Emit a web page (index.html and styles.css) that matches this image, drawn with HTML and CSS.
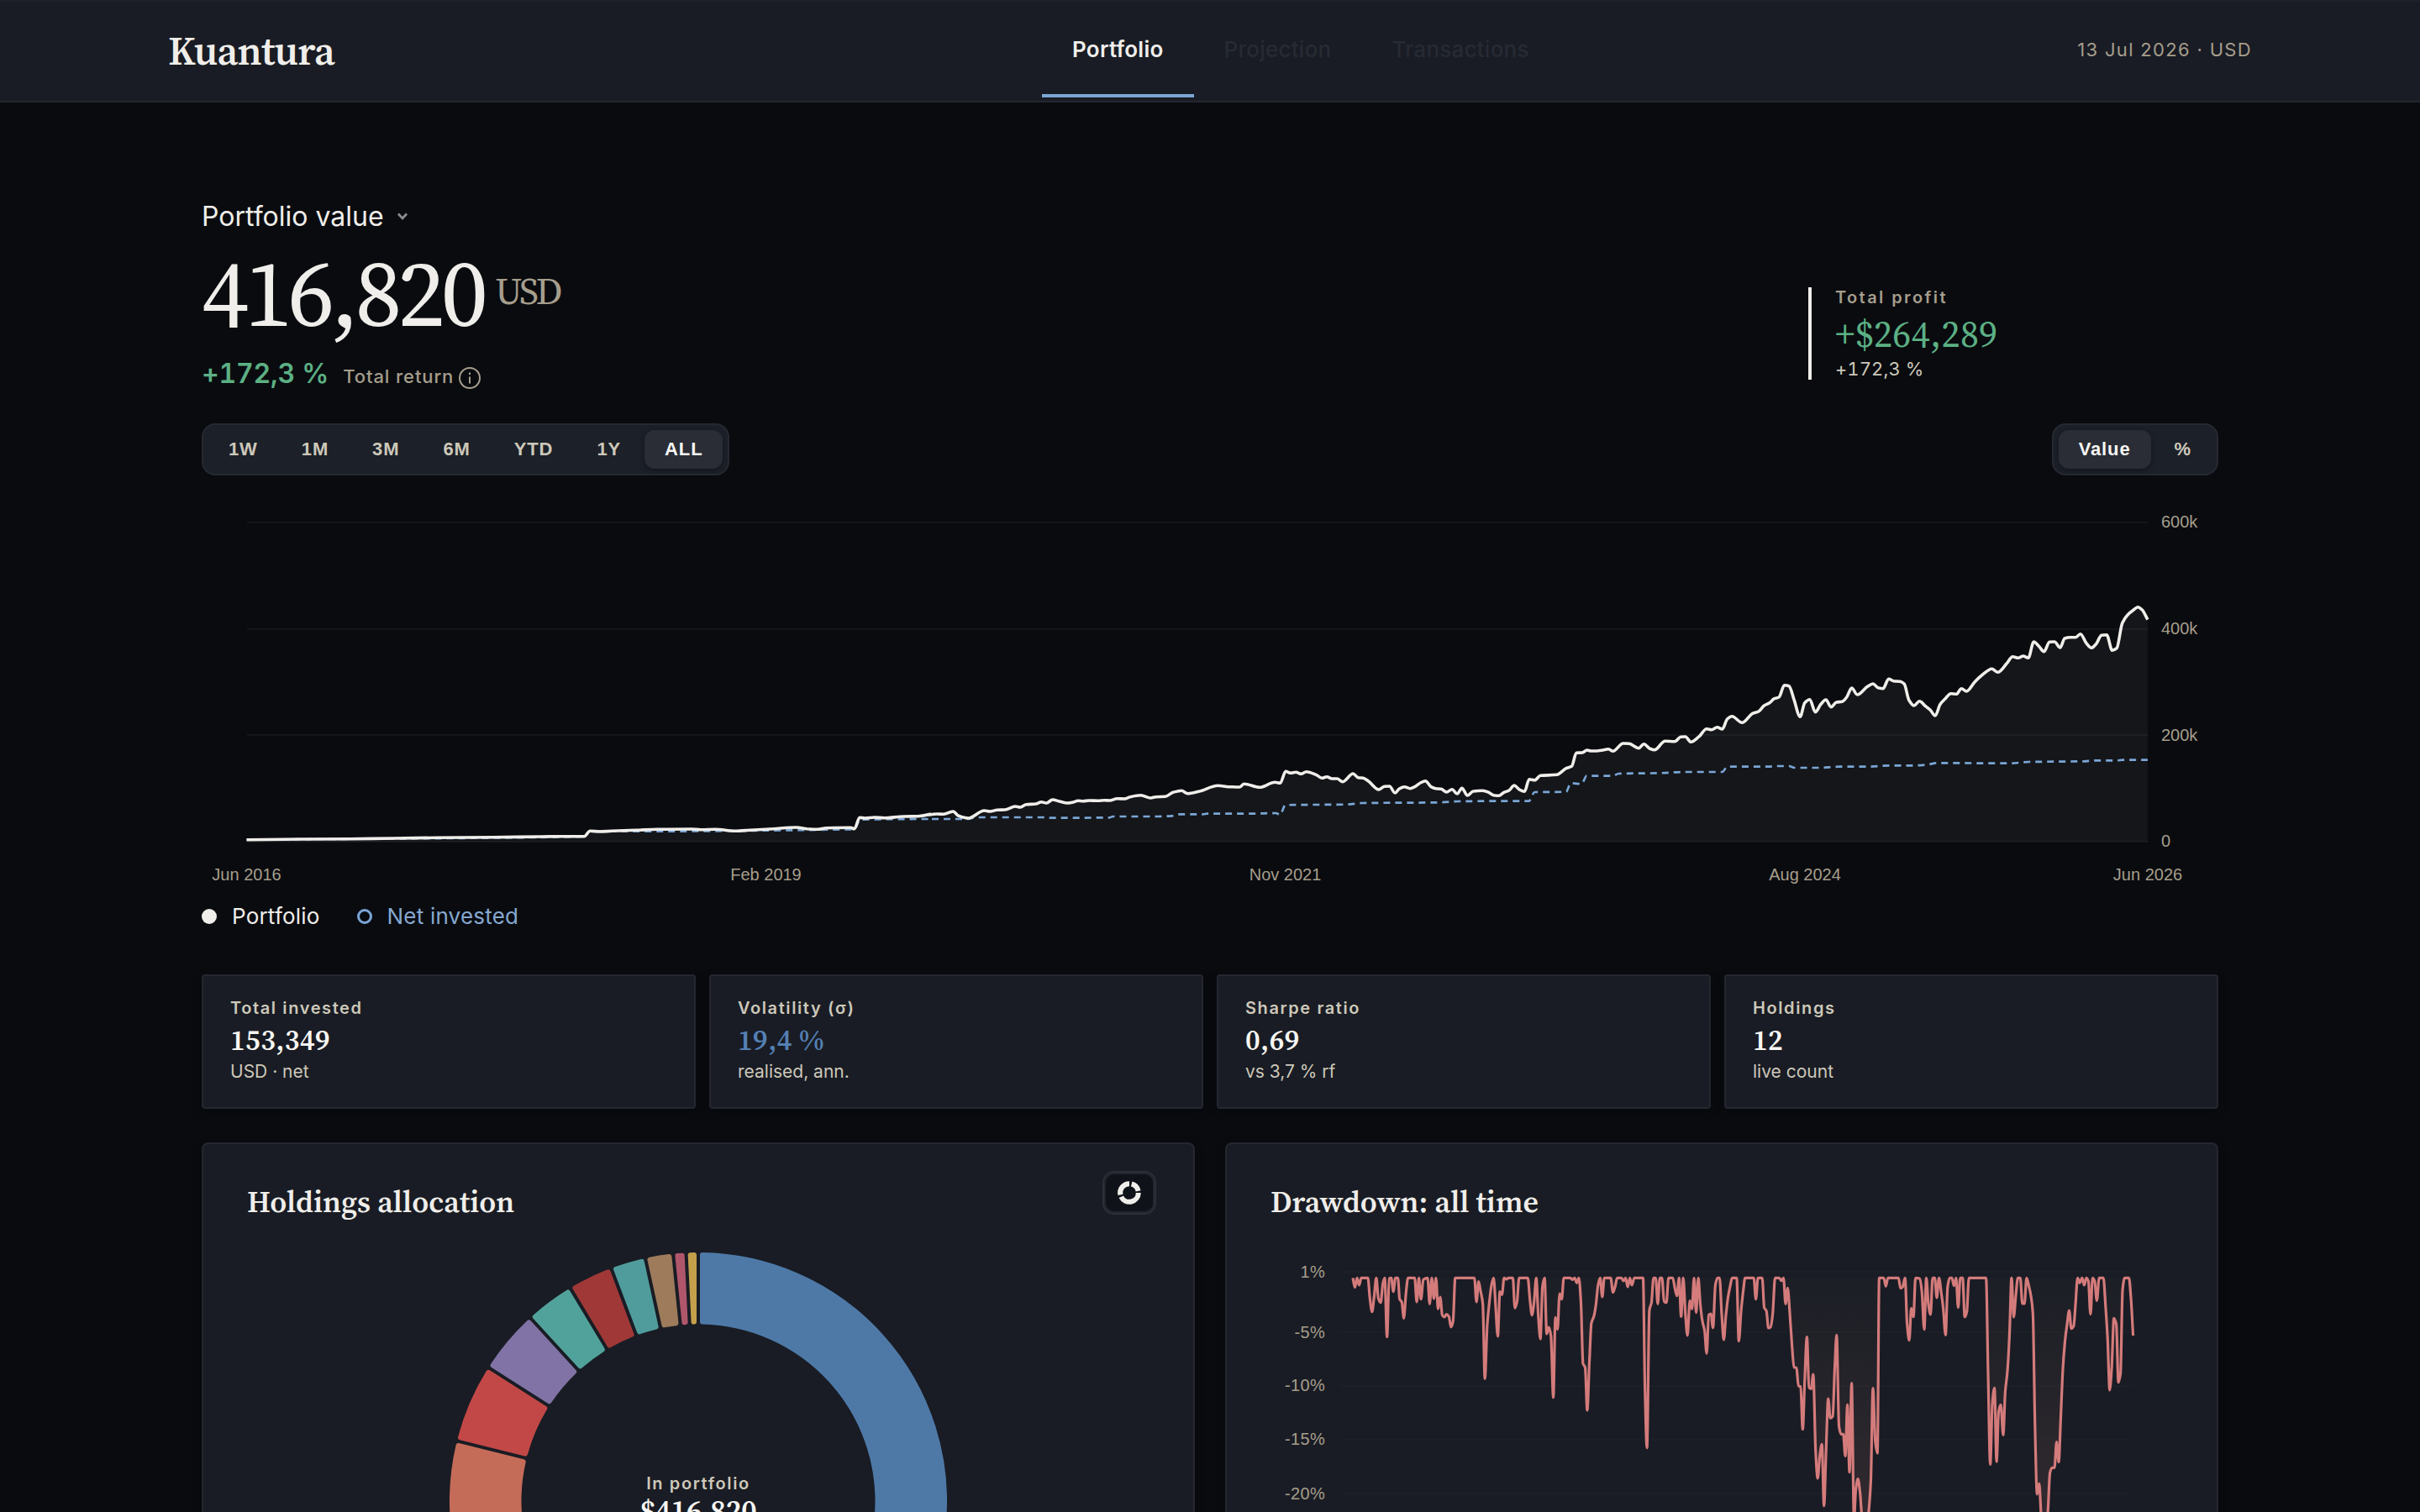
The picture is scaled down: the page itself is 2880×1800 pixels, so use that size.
FILE: index.html
```
<!DOCTYPE html>
<html lang="en">
<head>
    <meta charset="UTF-8">
    <meta name="viewport" content="width=device-width, initial-scale=1.0">
    <title>Kuantura</title>
    <link rel="stylesheet" href="styles.css">
</head>
<body>

<header class="topbar">
    <div class="logo">Kuantura</div>
    <nav class="tabs">
        <a class="tab active">Portfolio</a>
        <a class="tab">Projection</a>
        <a class="tab">Transactions</a>
    </nav>
    <div class="date">13 Jul 2026 · USD</div>
</header>

<main>
    <!-- Headline numbers -->
    <section class="hero">
        <div>
            <div class="hero-title">
                <span>Portfolio value</span>
                <svg class="chevron" width="16" height="12" viewBox="0 0 16 12"><path d="M3 2.5l5 5.5 5-5.5"/></svg>
            </div>
            <div class="hero-value"><span>416,820</span><span class="currency">USD</span></div>
            <div class="hero-return">
                <span class="gain">+172,3 %</span>
                <span class="return-label">Total return</span>
                <svg class="info" width="28" height="28" viewBox="0 0 28 28">
                    <circle cx="14" cy="14" r="12"/>
                    <path d="M14 12.5v8M14 7.5v2.4"/>
                </svg>
            </div>
        </div>
        <div class="profit">
            <div class="profit-label">Total profit</div>
            <div class="profit-value">+$264,289</div>
            <div class="profit-sub">+172,3 %</div>
        </div>
    </section>

    <div class="toolbar">
        <div class="segmented">
            <button>1W</button>
            <button>1M</button>
            <button>3M</button>
            <button>6M</button>
            <button>YTD</button>
            <button>1Y</button>
            <button class="active">ALL</button>
        </div>
        <div class="segmented">
            <button class="active">Value</button>
            <button>%</button>
        </div>
    </div>

    <!-- Value chart -->
    <svg class="chart" width="2400" height="460" viewBox="240 600 2400 460">
        <g class="grid">
            <path d="M294 622H2556M294 749H2556M294 875H2556M294 1002H2556"/>
        </g>
        <path id="valueArea" class="value-area"/>
        <path id="investedLine" class="invested-line"/>
        <path id="valueLine" class="value-line"/>
        <g class="axis">
            <text x="2572" y="628">600k</text>
            <text x="2572" y="755">400k</text>
            <text x="2572" y="882">200k</text>
            <text x="2572" y="1008">0</text>
        </g>
        <g class="axis axis-x">
            <text x="293.5" y="1048">Jun 2016</text>
            <text x="911.5" y="1048">Feb 2019</text>
            <text x="1529.5" y="1048">Nov 2021</text>
            <text x="2148" y="1048">Aug 2024</text>
            <text x="2556" y="1048">Jun 2026</text>
        </g>
    </svg>
    <div class="legend">
        <span class="dot"></span><span class="legend-portfolio">Portfolio</span>
        <span class="dot ring"></span><span class="legend-invested">Net invested</span>
    </div>

    <section class="stats">
        <div class="stat">
            <div class="stat-label">Total invested</div>
            <div class="stat-value">153,349</div>
            <div class="stat-sub">USD · net</div>
        </div>
        <div class="stat">
            <div class="stat-label">Volatility (σ)</div>
            <div class="stat-value blue">19,4 %</div>
            <div class="stat-sub">realised, ann.</div>
        </div>
        <div class="stat">
            <div class="stat-label">Sharpe ratio</div>
            <div class="stat-value">0,69</div>
            <div class="stat-sub">vs 3,7 % rf</div>
        </div>
        <div class="stat">
            <div class="stat-label">Holdings</div>
            <div class="stat-value">12</div>
            <div class="stat-sub">live count</div>
        </div>
    </section>

    <section class="panels">
        <div class="panel">
            <div class="panel-head">
                <h2>Holdings allocation</h2>
                <button class="view-toggle">
                    <svg width="32" height="32" viewBox="0 0 32 32">
                        <path d="M18.7 5.5A10.8 10.8 0 0 1 26.6 13.8M26.8 16A10.8 10.8 0 0 1 6.3 20.7M5.4 18.4A10.8 10.8 0 0 1 16 5.2"/>
                    </svg>
                </button>
            </div>
            <svg class="chart" width="1074" height="620" viewBox="294 1480 1074 620">
                <g id="donut"></g>
                <text class="donut-label" x="831" y="1773">In portfolio</text>
                <text class="donut-value" x="831" y="1811">$416,820</text>
            </svg>
        </div>
        <div class="panel">
            <div class="panel-head">
                <h2>Drawdown: all time</h2>
            </div>
            <svg class="chart" width="1074" height="620" viewBox="1512 1480 1074 620">
                <defs>
                    <linearGradient id="ddFill" gradientUnits="userSpaceOnUse" x1="0" y1="1521" x2="0" y2="1850">
                        <stop offset="0" stop-color="#8a7a60" stop-opacity="0.03"/>
                        <stop offset="1" stop-color="#d47b7b" stop-opacity="0.16"/>
                    </linearGradient>
                </defs>
                <g class="grid faint">
                    <path d="M1594 1514H2539M1594 1586H2539M1594 1650H2539M1594 1714H2539M1594 1778H2539"/>
                </g>
                <path id="ddArea" fill="url(#ddFill)"/>
                <path id="ddLine" class="dd-line"/>
                <g class="axis axis-y">
                    <text x="1577" y="1521">1%</text>
                    <text x="1577" y="1592.5">-5%</text>
                    <text x="1577" y="1656">-10%</text>
                    <text x="1577" y="1720">-15%</text>
                    <text x="1577" y="1784.5">-20%</text>
                </g>
            </svg>
        </div>
    </section>
</main>

<script>
// Each chunk: origin x/y, units per pixel x/y, then the "x,y" pairs
const VALUE = [
    [220, 840, 1.742, 3, '128,479 240,477 340,476 435,474 520,472 640,470 740,468 780,467 828,467 840,448 860,450 885,448 935,445 980,442 1050,441 1070,443 1100,442 1140,448 1170,445 1220,440 1268,435 1290,440 1312,442 1330,437 1380,436 1388,440 1399,400 1410,402 1430,399 1450,401 1490,396 1520,395 1545,388'],
    [1100, 780, 1.96, 3, '12,570 30,567 45,568 67,558 80,574 103,582 140,555 153,558 170,553 188,552 212,540 224,543 238,533 260,531 273,524 285,528 299,516 315,522 334,528 345,526 359,520 370,521 385,519 405,520 420,518 432,519 450,512 467,513 480,506 505,500 528,510 540,506 562,505 580,490 600,484 614,494 640,487 685,466 710,470 735,471 746,460 782,472 818,454 830,457 843,415 855,421 867,418 879,424 891,416 915,428 928,439 939,434 951,441 963,441 976,452 1000,423 1012,437 1024,439 1036,450 1060,480 1073,469 1085,468 1098,492 1108,477 1120,470 1133,476 1145,469 1157,456 1169,449 1182,470 1193,476 1206,478 1218,489 1231,479 1243,495 1254,475 1267,501 1280,486 1300,484 1314,488 1328,500 1340,502 1352,490 1364,483 1376,465 1388,480 1400,487 1411,443 1424,446 1437,430 1475,427 1497,404 1510,397 1521,349 1535,348 1546,339 1555,342 1568,342'],
    [1800, 600, 1.823, 3, '196,879 208,875 218,883 240,855 253,856 274,872 285,857 298,874 308,878 331,847 352,848 365,832 375,831 387,850 405,830 421,803 432,806 444,797 455,804 466,768 476,758 498,781 521,748 534,741 546,720 557,711 568,695 578,690 590,647 600,650 611,700 624,760 634,710 645,698 657,743 669,715 680,699 691,725 703,708 715,706 725,690 736,657 748,681 770,652 782,642 793,656 804,659 816,625 827,632 841,634 850,643 860,700 871,720 883,704 896,722 906,735 917,756 928,715 939,695 951,677 963,679 974,659 985,669 1003,635 1018,612 1040,589 1053,601 1072,570 1085,545 1097,550 1108,543 1119,550 1131,492 1142,508 1153,527 1165,493 1176,492 1188,513 1198,480 1210,476 1222,476 1232,464 1245,497 1256,514 1266,500 1278,469 1289,467 1301,523 1311,515 1323,425 1335,395 1346,380 1357,368 1366,378 1378,413']
];

const INVESTED = [
    [220, 840, 1.742, 3, '128,479 825,468 840,449 930,449 1380,442 1388,441 1400,407 1545,405'],
    [1100, 780, 1.96, 3, '12,585 103,585 118,579 275,579 290,581 432,580 440,576 545,576 578,574 592,568 650,568 660,566 760,566 820,564 830,570 842,535 985,533 1022,528 1200,526 1245,522 1330,521 1410,521 1424,489 1497,488 1508,457 1533,460 1545,431 1568,431'],
    [1800, 600, 1.823, 3, '218,971 230,963 320,961 370,957 455,957 466,938 555,938 570,936 600,936 612,942 665,942 710,938 770,938 820,934 870,934 900,931 920,925 1080,926 1120,921 1240,919 1260,916 1310,916 1325,914 1378,914']
];

const DRAWDOWN = [
    [1500, 1480, 2.8, 3, '308,124 315,158 322,124 329,150 336,124 358,124 365,200 372,245 379,190 386,124 393,198 401,212 408,145 414,124 422,335 429,126 436,124 443,173 450,124 458,124 464,200 471,210 478,268 485,180 492,124 514,124 521,210 528,124 535,200 543,130 557,124 564,217 571,124 578,198 585,124 592,235 599,192 606,257 613,264 620,254 628,262 635,300 642,278 649,124 713,124 720,210 727,137 734,173 741,215 748,484 756,290 763,210 770,150 777,124 784,230 791,333 798,173 805,184 812,124 820,129 827,124 841,124 848,232 855,210 862,124 891,124 898,200 905,257 912,210 919,124 926,260 933,342 940,155 947,124 954,324 961,300 968,330 976,551 983,265 990,308 997,180 1004,200 1011,124 1032,124 1040,130 1047,124 1054,142 1061,124 1068,210 1075,430 1082,443 1089,597 1096,430 1103,285 1111,262 1118,220 1125,150 1132,124 1139,192 1146,124 1167,124 1175,176 1182,155 1189,124 1203,124 1210,135 1217,124 1224,156 1231,124 1238,150 1246,124 1275,124 1281,500 1288,731 1296,240 1303,212 1310,124 1317,124 1324,217 1331,124 1338,124 1345,208 1353,212 1360,124 1374,124 1381,160 1388,188 1395,124 1402,262 1409,124 1416,250 1423,330 1431,205 1438,235 1445,124 1452,248 1459,124 1466,220 1473,280 1480,312 1487,394 1494,256 1501,252 1508,302'],
    [2040, 1480, 2.8, 3, '4,150 11,124 18,124 25,250 32,345 39,260 46,195 53,155 60,124 75,124 82,350 90,240 97,170 103,124 132,124 139,200 146,124 160,124 167,230 174,242 181,303 188,300 195,255 203,124 217,124 224,134 231,124 238,217 245,160 252,250 259,360 266,443 274,445 281,510 288,512 295,665 302,480 309,335 316,515 323,520 330,468 338,740 345,840 352,760 359,718 366,938 373,740 380,555 387,625 395,618 402,440 408,328 416,655 423,682 430,682 437,760 444,577 451,818 458,500 466,985 472,880 479,842 486,890 493,990 500,1050 508,1050 515,960 522,850 529,518 537,710 544,750 550,124 565,124 572,154 579,124 614,124 621,161 628,156 636,124 643,290 650,347 657,232 664,263 671,124 685,126 692,170 700,308 707,124 714,220 721,255 728,124 735,124 742,195 749,124 757,180 763,230 771,328 778,155 785,124 792,124 799,152 806,124 813,230 820,124 828,124 835,264 842,245 849,124 906,124 913,480 920,790 927,570 934,517 941,780 948,600 955,577 963,685 970,530 977,460 984,330 991,124 998,264 1005,190 1012,124 1020,124 1027,216 1034,216 1041,124 1048,150 1055,185 1062,250 1069,650 1076,897 1083,858 1090,980 1098,1040 1105,1040 1112,960 1119,820 1126,802 1134,802 1141,710 1148,782 1155,620 1162,450 1169,350 1176,290 1183,240 1190,305 1198,295 1204,220 1211,124 1218,142 1226,124 1233,150 1240,124 1247,136 1254,254 1261,124 1268,136 1275,205 1283,124 1297,124 1304,220 1311,340 1318,525 1325,440 1332,268 1340,290 1347,497 1354,465 1361,165 1368,124 1382,124 1389,200 1396,330']
];

function toPoints(chunks) {
    return chunks.flatMap(([ox, oy, kx, ky, text]) => text.split(' ').map(pair => {
        const [x, y] = pair.split(',').map(Number);
        return [ox + x / kx, oy + y / ky];
    }));
}

// Monotone cubic path through the points
function smoothPath(p) {
    const n = p.length;
    const slope = [];
    for (let i = 0; i < n - 1; i++) {
        slope.push((p[i + 1][1] - p[i][1]) / (p[i + 1][0] - p[i][0]));
    }
    const m = p.map((_, i) => {
        if (i === 0) return slope[0];
        if (i === n - 1) return slope[n - 2];
        const a = slope[i - 1], b = slope[i];
        return a * b <= 0 ? 0 : 2 * a * b / (a + b);
    });
    let d = `M${p[0][0].toFixed(1)} ${p[0][1].toFixed(1)}`;
    for (let i = 0; i < n - 1; i++) {
        const h = (p[i + 1][0] - p[i][0]) / 3;
        d += 'C' + [p[i][0] + h, p[i][1] + h * m[i], p[i + 1][0] - h, p[i + 1][1] - h * m[i + 1], p[i + 1][0], p[i + 1][1]]
            .map(v => v.toFixed(1)).join(' ');
    }
    return d;
}

function setPath(id, d) {
    document.getElementById(id).setAttribute('d', d);
}

const value = smoothPath(toPoints(VALUE));
setPath('valueLine', value);
setPath('valueArea', value + 'V1002H294Z');
setPath('investedLine', smoothPath(toPoints(INVESTED)));

const drawdown = smoothPath(toPoints(DRAWDOWN));
setPath('ddLine', drawdown);
setPath('ddArea', drawdown + 'V1521H1610Z');

// Donut slices: start and end angle in degrees, clockwise from the top
const SLICES = [
    [0, 190, '#4e79a7'],
    [190, 284, '#c56c59'],
    [284, 302.5, '#c24847'],
    [302.5, 317.5, '#8173a5'],
    [317.5, 329, '#51a29b'],
    [329, 339.5, '#a03837'],
    [339.5, 347.7, '#509c9c'],
    [347.7, 354.2, '#9d7b5b'],
    [354.2, 357.2, '#b0566b'],
    [357.2, 360, '#c4a04b']
];

const CX = 831, CY = 1787, ROUND = 3, INSET = 5;
const OUTER = 296 - ROUND, INNER = 210.5 + ROUND;

function polar(r, a) {
    return `${(CX + r * Math.sin(a)).toFixed(2)} ${(CY - r * Math.cos(a)).toFixed(2)}`;
}

SLICES.forEach(([from, to, color]) => {
    const a = from * Math.PI / 180, b = to * Math.PI / 180;
    const o = Math.asin(INSET / OUTER), i = Math.asin(INSET / INNER);
    const large = to - from > 180 ? 1 : 0;
    const slice = document.createElementNS('http://www.w3.org/2000/svg', 'path');
    slice.setAttribute('d', `M${polar(OUTER, a + o)}A${OUTER} ${OUTER} 0 ${large} 1 ${polar(OUTER, b - o)}L${polar(INNER, b - i)}A${INNER} ${INNER} 0 ${large} 0 ${polar(INNER, a + i)}Z`);
    slice.setAttribute('fill', color);
    slice.setAttribute('stroke', color);
    slice.setAttribute('stroke-width', ROUND * 2);
    slice.setAttribute('stroke-linejoin', 'round');
    document.getElementById('donut').appendChild(slice);
});
</script>

</body>
</html>
```
FILE: styles.css
```
* {
    box-sizing: border-box;
}
body {
    margin: 0;
    height: 1800px;
    overflow: hidden;
    background: #090b0f;
    color: #f0eeea;
    font-family: Inter, "Liberation Sans", sans-serif;
}
button {
    border: none;
    padding: 0;
    background: none;
}

/* Header */
.topbar {
    display: grid;
    grid-template-columns: 1040px 1fr auto;
    height: 122px;
    padding: 0 200px;
    background: #191c24;
    border-bottom: 2px solid #24272f;
    box-shadow: inset 0 2px 0 #1e212a;
}
.logo {
    font-family: "Source Serif 4", "Liberation Serif", serif;
    font-size: 48px;
    font-weight: 600;
    line-height: 120px;
    letter-spacing: -0.7px;
}
.tabs {
    display: flex;
}
.tab {
    height: 116px;
    padding: 1px 36px 0;
    font-size: 26px;
    font-weight: 500;
    line-height: 116px;
    letter-spacing: 0.24px;
    color: #262a33;
}
.tab.active {
    font-weight: 600;
    color: #f0eeea;
    border-bottom: 4px solid #7ba6d6;
}
.date {
    font-size: 22px;
    line-height: 118px;
    letter-spacing: 1.32px;
    color: #a69e8c;
}

main {
    width: 2400px;
    margin: 0 auto;
    padding-top: 116px;
}

/* Hero */
.hero {
    display: grid;
    grid-template-columns: 1fr 488px;
    align-items: end;
}
.hero-title {
    display: flex;
    align-items: center;
    gap: 14px;
    font-size: 32px;
    line-height: 40px;
}
.chevron {
    fill: none;
    stroke: #8c8c8c;
    stroke-width: 2.8;
}
.hero-value {
    display: flex;
    margin-top: 15px;
    font-family: "Source Serif 4", "Liberation Serif", serif;
    font-size: 112px;
    line-height: 112px;
    letter-spacing: -4.8px;
}
.currency {
    margin-left: 13px;
    font-size: 45px;
    line-height: 106px;
    letter-spacing: -2.9px;
    color: #a69e8c;
}
.hero-return {
    display: flex;
    align-items: center;
    margin-top: 20px;
    line-height: 40px;
}
.gain {
    font-size: 32px;
    font-weight: 600;
    font-variant-numeric: tabular-nums;
    letter-spacing: -0.2px;
    color: #5cb084;
}
.return-label {
    margin-left: 17px;
    padding-top: 7px;
    font-size: 22px;
    font-weight: 500;
    line-height: 33px;
    letter-spacing: 0.9px;
    color: #a69e8c;
}
.info {
    margin: 10px 0 0 5px;
    fill: none;
    stroke: #a69e8c;
    stroke-width: 2;
}
.profit {
    margin-bottom: 13px;
    padding-left: 28px;
    border-left: 4px solid #f0eeea;
}
.profit-label {
    font-size: 20px;
    font-weight: 600;
    line-height: 24px;
    letter-spacing: 2.4px;
    color: #a69e8c;
}
.profit-value {
    margin: 10px 0 6px;
    font-family: "Source Serif 4", "Liberation Serif", serif;
    font-size: 44px;
    line-height: 44px;
    letter-spacing: 0.35px;
    color: #5cb084;
}
.profit-sub {
    font-size: 22px;
    font-variant-numeric: tabular-nums;
    line-height: 26px;
    letter-spacing: 0.1px;
    color: #cdc8ba;
}

/* Range and unit switches */
.toolbar {
    display: flex;
    justify-content: space-between;
    margin-top: 39px;
}
.segmented {
    display: flex;
    gap: 4px;
    height: 62px;
    padding: 6px;
    border: 2px solid #262931;
    border-radius: 16px;
    background: #1c2028;
}
.segmented button {
    padding: 0 24px;
    border-radius: 12px;
    font-family: "Liberation Sans", Arial, sans-serif;
    font-size: 22px;
    font-weight: 700;
    line-height: 46px;
    letter-spacing: 0.88px;
    color: #cdc8ba;
}
.segmented button.active {
    background: #2a2d36;
    color: #f7f6f3;
    box-shadow: 0 2px 6px rgba(0, 0, 0, 0.35);
}

/* Charts */
.chart {
    display: block;
}
main > .chart {
    margin-top: 34px;
}
.grid path {
    stroke: #14161a;
    stroke-width: 2;
}
.grid.faint path {
    stroke: #1c1f26;
}
.axis text {
    font-family: "Liberation Sans", Arial, sans-serif;
    font-size: 20px;
    fill: #a69e8c;
}
.axis-x text {
    text-anchor: middle;
}
.axis-y text {
    text-anchor: end;
    letter-spacing: 0.3px;
}
.value-area {
    fill: rgba(240, 238, 234, 0.05);
}
.value-line {
    fill: none;
    stroke: #f0eeea;
    stroke-width: 3.6;
    stroke-linejoin: round;
}
.invested-line {
    fill: none;
    stroke: #7ba6d6;
    stroke-width: 2.7;
    stroke-dasharray: 8 6;
}
.dd-line {
    fill: none;
    stroke: #d47b7b;
    stroke-width: 3.2;
    stroke-linejoin: round;
}
.legend {
    display: flex;
    align-items: center;
    margin-top: 15px;
    height: 32px;
    font-size: 26px;
    line-height: 32px;
    letter-spacing: 0.2px;
}
.dot {
    width: 18px;
    height: 18px;
    margin-right: 18px;
    border-radius: 50%;
    background: #f0eeea;
}
.dot.ring {
    margin-left: 44px;
    border: 3.5px solid #7ba6d6;
    background: none;
}
.legend-invested {
    color: #86a8d0;
}

/* Stat cards */
.stats {
    display: grid;
    grid-template-columns: repeat(4, 1fr);
    gap: 16px;
    margin-top: 53px;
}
.stat {
    height: 160px;
    padding: 26px 32px;
    border: 2px solid #24272f;
    border-radius: 4px;
    background: #191c24;
    box-shadow: 0 4px 12px rgba(0, 0, 0, 0.3);
}
.stat-label {
    font-size: 20px;
    font-weight: 600;
    line-height: 24px;
    letter-spacing: 1.6px;
    color: #cdc8ba;
}
.stat-value {
    margin: 8px 0;
    font-family: "Source Serif 4", "Liberation Serif", serif;
    font-size: 34px;
    font-weight: 600;
    line-height: 36px;
    letter-spacing: 0.4px;
    color: #f7f6f3;
}
.stat-value.blue {
    color: #5480b4;
}
.stat-sub {
    font-size: 21px;
    line-height: 24px;
    color: #cdc8ba;
}

/* Panels */
.panels {
    display: grid;
    grid-template-columns: 1fr 1fr;
    gap: 36px;
    margin-top: 40px;
}
.panel {
    padding: 32px 52px 0;
    border: 2px solid #24272f;
    border-radius: 8px;
    background: #191c24;
    box-shadow: 0 4px 12px rgba(0, 0, 0, 0.3);
}
.panel-head {
    display: flex;
    justify-content: space-between;
    height: 86px;
    margin-right: -8px;
}
.panel h2 {
    margin: 15px 0 0;
    font-family: "Source Serif 4", "Liberation Serif", serif;
    font-size: 36px;
    font-weight: 600;
    line-height: 44px;
}
.view-toggle {
    display: flex;
    align-items: center;
    justify-content: center;
    width: 64px;
    height: 52px;
    border: 2px solid #2c2f38;
    border-radius: 14px;
    background: #0f1219;
    box-shadow: inset 0 0 0 2px #22252d;
}
.view-toggle path {
    fill: none;
    stroke: #f0eeea;
    stroke-width: 6;
}
.donut-label {
    font-size: 20px;
    font-weight: 600;
    letter-spacing: 1.6px;
    text-anchor: middle;
    fill: #cdc8ba;
}
.donut-value {
    font-family: "Source Serif 4", "Liberation Serif", serif;
    font-size: 36px;
    font-weight: 600;
    letter-spacing: -0.4px;
    text-anchor: middle;
    fill: #f7f6f3;
}
```
